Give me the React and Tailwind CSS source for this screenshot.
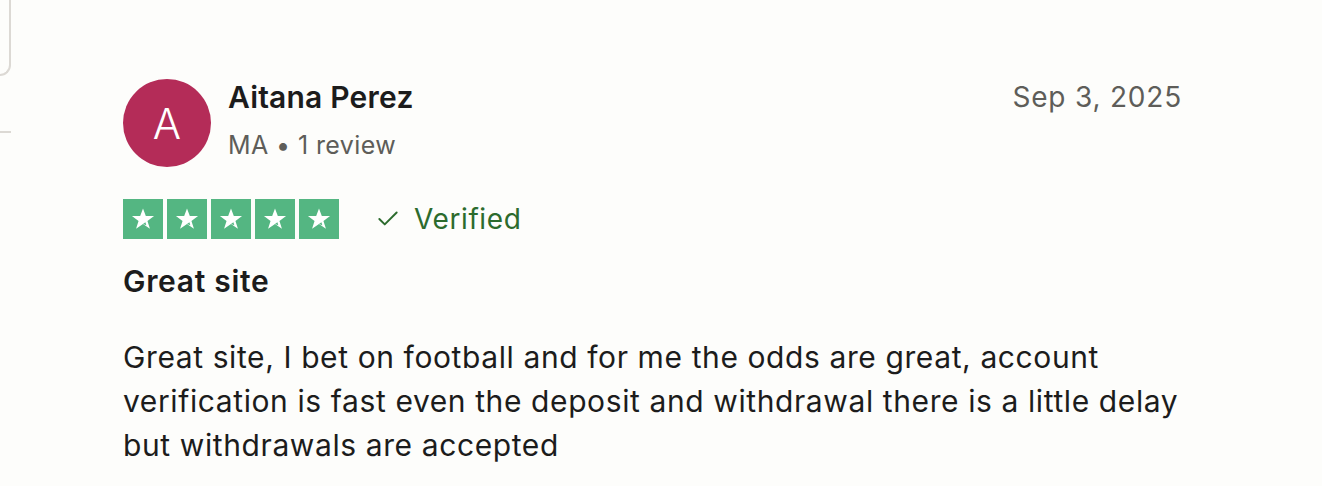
import { Check } from 'lucide-react';

const Star = () => (
    <div className="w-10 h-10 bg-[#54b682] flex items-center justify-center">
        <svg viewBox="0 0 24 24" className="w-[26px] h-[26px]">
            <path d="M12 2.2l2.6 7.1h7.6l-6.1 4.5 2.3 7.3L12 16.6l-6.4 4.5 2.3-7.3-6.1-4.5h7.6z" fill="#fff" />
            <path d="M12 16.6l2.2-1.6 0.9 2.7z" fill="#54b682" />
        </svg>
    </div>
);

const App = () => {
    return (
        <div className="w-[1322px] h-[486px] bg-[#fdfdfb] flex overflow-hidden" style={{ fontFamily: 'Inter, "Noto Sans", sans-serif' }}>
            {/* left card edge */}
            <div className="w-[11px] shrink-0 flex flex-col">
                <div className="h-[76px] border-r-2 border-b-2 border-[#dcd9d4] rounded-br-[16px]" />
                <div className="mt-[55px] h-[2px] bg-[#dcd9d4]" />
            </div>

            <div className="ml-[112px] w-[1060px] pt-[79px] text-[#1c1c1c]">
                {/* header */}
                <div className="flex items-start">
                    <div className="w-[88px] h-[88px] rounded-full bg-[#b42c58] flex items-center justify-center text-white text-[42px] font-light">
                        A
                    </div>
                    <div className="ml-[17px] flex-1">
                        <div className="text-[30px] font-semibold leading-[40px] mt-[-2px] tracking-[0.2px]">Aitana Perez</div>
                        <div className="text-[25px] text-[#5e5d59] leading-[34px] mt-[11px] tracking-[0.4px]">MA • 1 review</div>
                    </div>
                    <div className="text-[28px] text-[#5e5d59] leading-[40px] mt-[-2px] tracking-[0.8px] mr-[1px]">Sep 3, 2025</div>
                </div>

                {/* rating */}
                <div className="flex items-center mt-[32px]">
                    <div className="flex gap-[4px]">
                        <Star />
                        <Star />
                        <Star />
                        <Star />
                        <Star />
                    </div>
                    <div className="flex items-center ml-[36px] text-[#2c6b2d]">
                        <Check className="w-[26px] h-[26px]" strokeWidth={1.8} />
                        <span className="ml-[13px] text-[28px] leading-[40px] tracking-[0.6px]">Verified</span>
                    </div>
                </div>

                {/* content */}
                <h2 className="mt-[22px] text-[30px] font-semibold leading-[40px] tracking-[0.7px]">Great site</h2>
                <p className="mt-[34px] w-[1060px] text-[30px] leading-[44px] tracking-[0.6px] text-[#1c1c1c]">
                    Great site, I bet on football and for me the odds are great, account verification is fast even the deposit and withdrawal there is a little delay but withdrawals are accepted
                </p>
            </div>
        </div>
    );
};

export default App;
